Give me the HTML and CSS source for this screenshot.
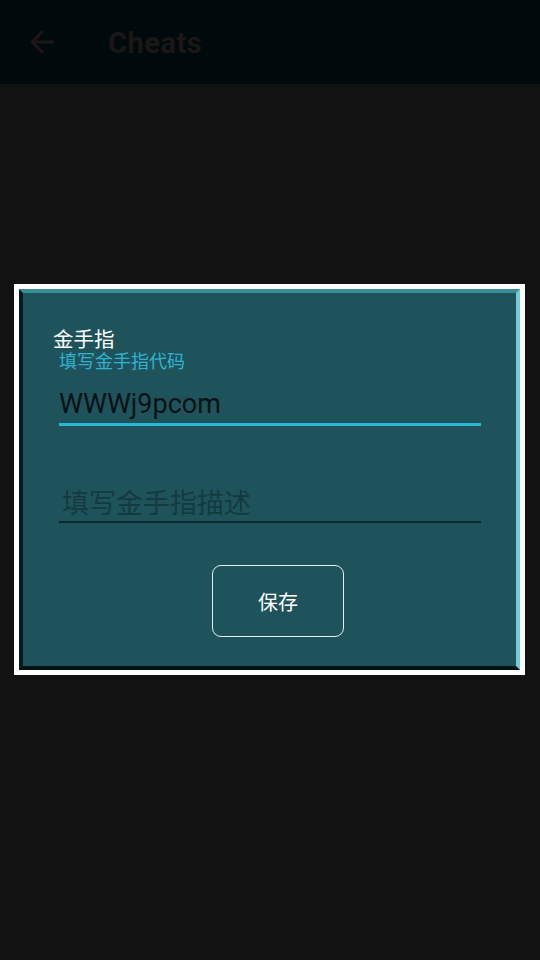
FILE: index.html
```html
<!DOCTYPE html>
<html>
<head>
<meta charset="utf-8">
<link rel="stylesheet" href="styles.css">
</head>
<body>
<div class="appbar">
  <svg class="back" viewBox="0 0 24 24" width="36" height="36"><path d="M20 11H7.83l5.59-5.59L12 4l-8 8 8 8 1.41-1.41L7.83 13H20v-2z" fill="#1c1616"/></svg>
  <div class="title">Cheats</div>
</div>
<div class="frame">
  <div class="dialog">
    <div class="dtitle">金手指</div>
    <div class="label">填写金手指代码</div>
    <div class="field active"><span class="value">WWWj9pcom</span></div>
    <div class="field hint"><span class="placeholder">填写金手指描述</span></div>
    <div class="btn">保存</div>
  </div>
</div>
</body>
</html>
```
FILE: styles.css
```css
html, body {
  margin: 0;
  padding: 0;
  background: #121212;
  width: 540px;
  height: 960px;
  overflow: hidden;
  font-family: "Noto Sans CJK SC", "Noto Sans", sans-serif;
}
.appbar {
  height: 84px;
  background: #00090c;
  display: flex;
  align-items: center;
}
.back {
  margin-left: 24px;
  flex: none;
}
.title {
  margin-left: 48px;
  margin-top: 2px;
  font-family: Roboto, "Liberation Sans", sans-serif;
  font-weight: bold;
  font-size: 29px;
  color: #1b1717;
  letter-spacing: 0.5px;
}
.frame {
  margin: 200px 0 0 14px;
  width: 501px;
  padding: 5px;
  background: #ffffff;
}
.dialog {
  background: #1f535c;
  border-top: 4px solid #3a8e9a;
  border-left: 4px solid #071a1d;
  border-right: 4px solid #76cbd8;
  border-bottom: 4px solid #041214;
  padding: 33px 0 29px 0;
  display: flex;
  flex-direction: column;
}
.dtitle {
  margin-left: 30px;
  font-size: 20.5px;
  line-height: 24px;
  color: #ffffff;
}
.label {
  margin-left: 36px;
  font-size: 18px;
  line-height: 21px;
  color: #30b2cf;
}
.field {
  margin-left: 36px;
  width: 422px;
}
.active {
  margin-top: 15px;
  height: 37px;
  border-bottom: 3px solid #2bb6d6;
}
.value {
  font-family: Roboto, "Liberation Sans", sans-serif;
  font-size: 27px;
  line-height: 36px;
  color: #061214;
  display: block;
}
.hint {
  margin-top: 60px;
  padding-bottom: 3px;
  border-bottom: 2px solid #10292d;
}
.placeholder {
  display: block;
  margin-left: 3px;
  font-size: 27px;
  line-height: 32px;
  color: #143a40;
}
.btn {
  margin: 42px 0 0 189px;
  width: 130px;
  height: 70px;
  border: 1px solid #e6eef0;
  border-radius: 9px;
  display: flex;
  align-items: center;
  justify-content: center;
  font-size: 20px;
  color: #ffffff;
}
```
